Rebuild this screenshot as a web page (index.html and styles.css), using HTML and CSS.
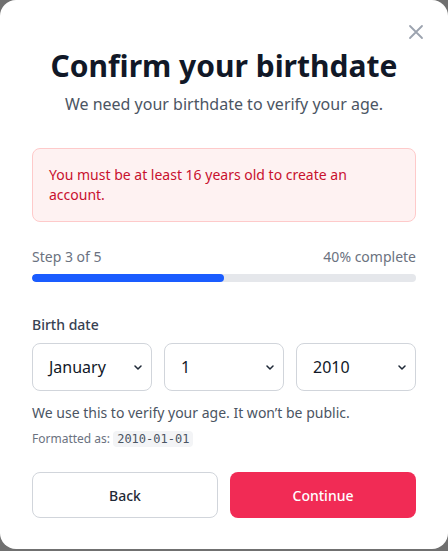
FILE: index.html
```html
<!DOCTYPE html>
<html lang="en">
<head>
<meta charset="utf-8">
<link rel="stylesheet" href="styles.css">
</head>
<body>
<div class="modal">
  <button class="close" aria-label="Close">
    <svg width="16" height="16" viewBox="0 0 16 16"><path d="M2 2 L14 14 M14 2 L2 14" stroke="#9ca3af" stroke-width="1.8" stroke-linecap="round" fill="none"/></svg>
  </button>
  <h1 class="title">Confirm your birthdate</h1>
  <p class="subtitle">We need your birthdate to verify your age.</p>
  <div class="alert">You must be at least 16 years old to create an account.</div>
  <div class="progress">
    <div class="progress-labels"><span>Step 3 of 5</span><span>40% complete</span></div>
    <div class="track"><div class="fill" style="width:50%"></div></div>
  </div>
  <div class="field">
    <label class="label">Birth date</label>
    <div class="selects">
      <div class="select"><span>January</span><svg class="chev" width="8" height="5" viewBox="0 0 8 5"><path d="M1 1 L4 4 L7 1" stroke="#1f2937" stroke-width="1.5" fill="none" stroke-linecap="round" stroke-linejoin="round"/></svg></div>
      <div class="select"><span>1</span><svg class="chev" width="8" height="5" viewBox="0 0 8 5"><path d="M1 1 L4 4 L7 1" stroke="#1f2937" stroke-width="1.5" fill="none" stroke-linecap="round" stroke-linejoin="round"/></svg></div>
      <div class="select"><span>2010</span><svg class="chev" width="8" height="5" viewBox="0 0 8 5"><path d="M1 1 L4 4 L7 1" stroke="#1f2937" stroke-width="1.5" fill="none" stroke-linecap="round" stroke-linejoin="round"/></svg></div>
    </div>
    <p class="help">We use this to verify your age. It won’t be public.</p>
    <p class="format">Formatted as: <code>2010-01-01</code></p>
  </div>
  <div class="actions">
    <button class="btn btn-back">Back</button>
    <button class="btn btn-primary">Continue</button>
  </div>
</div>
</body>
</html>
```
FILE: styles.css
```css
* { box-sizing: border-box; }
html, body { margin: 0; padding: 0; }
body {
  background: #707070;
  font-family: "Noto Sans", "Open Sans", sans-serif;
  width: 448px;
  height: 551px;
}
.modal {
  position: relative;
  background: #fff;
  border-radius: 16px;
  height: 549px;
  padding: 42px 32px 32px;
  display: flex;
  flex-direction: column;
}
.close {
  position: absolute;
  top: 24px;
  right: 24px;
  background: none;
  border: 0;
  padding: 0;
  width: 16px;
  height: 16px;
  display: flex;
}
.title {
  margin: 0;
  text-align: center;
  font-size: 30px;
  line-height: 48px;
  font-weight: 700;
  color: #111827;
}
.subtitle {
  margin: 2px 0 0;
  text-align: center;
  font-size: 16px;
  line-height: 24px;
  color: #4b5563;
}
.alert {
  margin-top: 32px;
  background: #fef2f2;
  border: 1px solid #fecaca;
  border-radius: 8px;
  padding: 16px;
  color: #c8102e;
  font-size: 14px;
  line-height: 20px;
}
.progress { margin-top: 25px; }
.progress-labels {
  display: flex;
  justify-content: space-between;
  font-size: 14px;
  line-height: 20px;
  color: #6b7280;
}
.track {
  margin-top: 7px;
  height: 8px;
  background: #e5e7eb;
  border-radius: 4px;
  overflow: hidden;
}
.fill { height: 100%; background: #1a5cff; border-radius: 4px; }
.field { margin-top: 33px; }
.label {
  display: block;
  font-size: 14px;
  line-height: 20px;
  font-weight: 500;
  color: #374151;
}
.selects {
  margin-top: 8px;
  display: grid;
  grid-template-columns: 1fr 1fr 1fr;
  gap: 12px;
}
.select {
  height: 48px;
  border: 1px solid #d1d5db;
  border-radius: 8px;
  display: flex;
  align-items: center;
  justify-content: space-between;
  padding: 0 9px 0 16px;
  font-size: 16px;
  color: #111827;
}
.help {
  margin: 12px 0 0;
  font-size: 14px;
  line-height: 20px;
  color: #4b5563;
}
.format {
  margin: 7px 0 0;
  font-size: 12px;
  line-height: 18px;
  color: #6b7280;
}
.format code {
  font-family: "DejaVu Sans Mono", monospace;
  font-size: 12px;
  background: #f3f4f6;
  color: #4b5563;
  padding: 1px 4px;
  border-radius: 4px;
}
.actions {
  margin-top: 24px;
  display: grid;
  grid-template-columns: 1fr 1fr;
  gap: 12px;
}
.btn {
  height: 46px;
  border-radius: 8px;
  font-family: inherit;
  font-size: 14px;
  font-weight: 500;
}
.btn-back { background: #fff; border: 1px solid #d1d5db; color: #1f2937; }
.btn-primary { background: #f12b55; border: 0; color: #fff; }
```
